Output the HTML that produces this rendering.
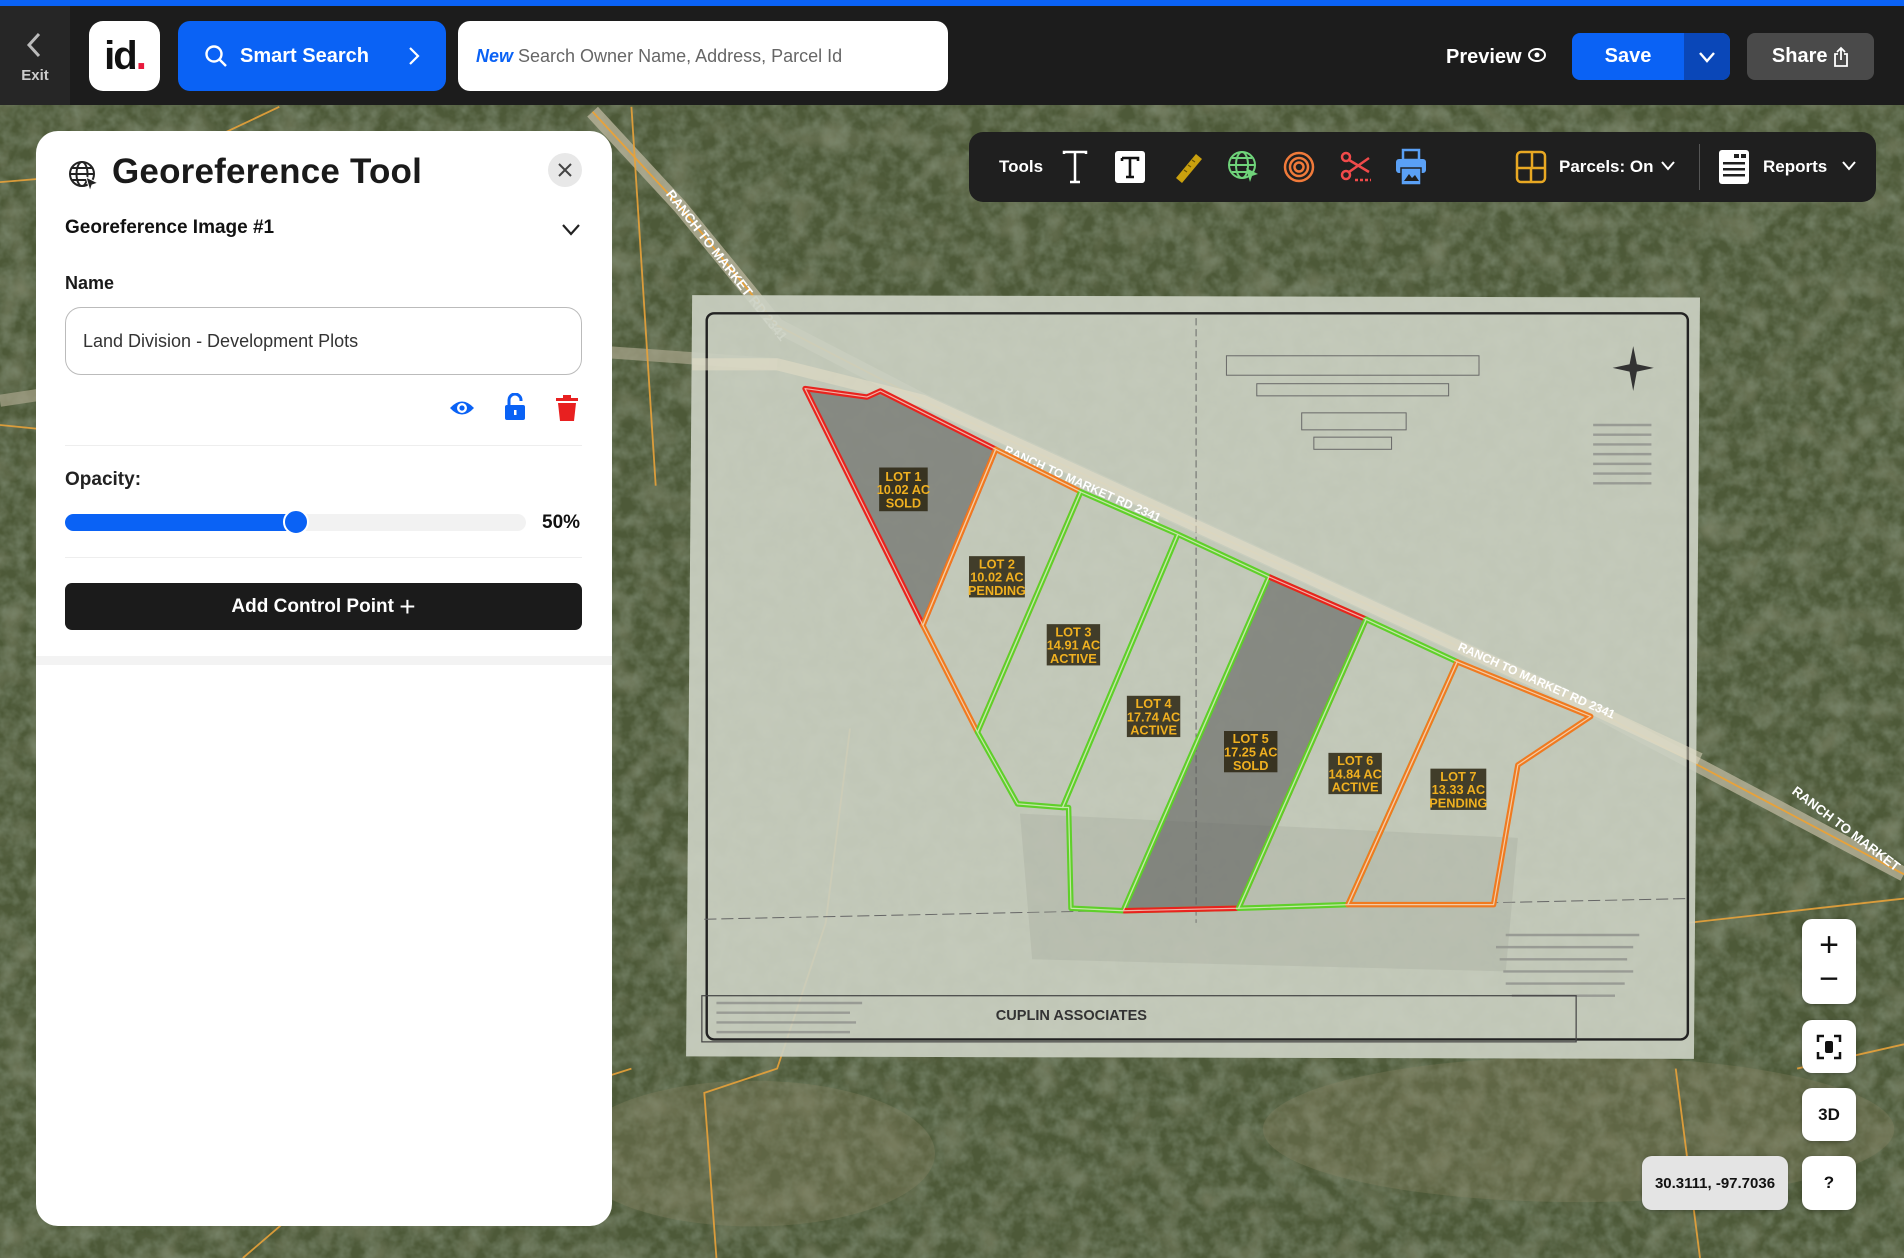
<!DOCTYPE html>
<html><head><meta charset="utf-8">
<style>
*{box-sizing:border-box;margin:0;padding:0}
body{width:1904px;height:1258px;overflow:hidden;font-family:"Liberation Sans",sans-serif;background:#4f5a3d;position:relative}
.abs{position:absolute}
#map{position:absolute;left:0;top:0;width:1904px;height:1258px}
.hdr{left:0;top:0;width:1904px;height:105px;background:#1c1c1c;border-top:6px solid #0a62f5}
.btn{display:flex;align-items:center;justify-content:center;border-radius:12px}
.ctrl{background:#fff;border-radius:10px;display:flex;align-items:center;justify-content:center;font-weight:bold;color:#111;box-shadow:0 1px 4px rgba(0,0,0,.3)}
</style></head><body>
<svg id="map" viewBox="0 0 1568 1036" preserveAspectRatio="none">
<defs>
<filter id="n"><feTurbulence type="fractalNoise" baseFrequency="0.09" numOctaves="3" seed="3"/><feColorMatrix values="0 0 0 0 0.2 0 0 0 0 0.25 0 0 0 0 0.16 0 0 0 1.6 -0.5"/></filter>
<filter id="n2"><feTurbulence type="fractalNoise" baseFrequency="0.04" numOctaves="2" seed="8"/><feColorMatrix values="0 0 0 0 0.5 0 0 0 0 0.5 0 0 0 0 0.38 0 0 0 1.4 -0.65"/></filter>
</defs>
<rect width="1568" height="1036" fill="#4d5938"/>
<rect width="1568" height="1036" filter="url(#n2)" opacity="0.6"/>
<rect width="1568" height="1036" filter="url(#n)" opacity="0.8"/>
<g fill="#8a8664" opacity="0.3">
<ellipse cx="300" cy="620" rx="160" ry="260"/><ellipse cx="1300" cy="930" rx="260" ry="60"/><ellipse cx="620" cy="950" rx="150" ry="60"/>
</g>
<polyline points="488,92 560,170 640,268 760,330 1000,440 1300,578 1568,720" fill="none" stroke="#b8b39a" stroke-width="12" opacity="0.8"/>
<polyline points="488,92 560,170 640,268 760,330 1000,440 1300,578 1568,720" fill="none" stroke="#e8a23a" stroke-width="1.5"/>
<polyline points="0,330 200,300 500,290 640,300" fill="none" stroke="#a9a58c" stroke-width="10" opacity="0.7"/>
<g fill="none" stroke="#e8a23a" stroke-width="1.5" opacity="0.9">
<polyline points="0,150 120,140 230,88"/><polyline points="520,88 540,400"/><polyline points="0,350 100,360 300,290"/>
<polyline points="700,600 680,760 640,880 580,900 590,1036"/><polyline points="200,1036 300,950 520,880"/>
<polyline points="1390,760 1568,740"/><polyline points="1480,880 1568,860"/><polyline points="1380,880 1400,1036"/>
</g>
<text x="548" y="160" fill="#fff" font-size="11" font-weight="bold" transform="rotate(52 548 160)">RANCH TO MARKET RD 2341</text>
<text x="1475" y="653" fill="#fff" font-size="11" font-weight="bold" transform="rotate(37 1475 653)">RANCH TO MARKET</text>
<polygon points="570,243 1400,245 1395,872 565,870" fill="#cbd0c2" opacity="0.92"/>
<rect x="582" y="258" width="808" height="598" rx="6" fill="none" stroke="#222" stroke-width="2"/>
<g fill="none" stroke="#666" stroke-width="0.8">
<rect x="1010" y="293" width="208" height="16"/><rect x="1035" y="316" width="158" height="10"/><rect x="1072" y="340" width="86" height="14"/><rect x="1082" y="360" width="64" height="10"/>
<line x1="985" y1="262" x2="985" y2="760" stroke-dasharray="6 3"/>
<line x1="580" y1="757" x2="1390" y2="740" stroke-dasharray="10 4"/>
</g>
<g stroke="#777" stroke-width="2" opacity="0.55">
<path d="M1240 770 H1350 M1232 780 H1345 M1235 790 H1340 M1238 800 H1345 M1240 810 H1338 M1245 820 H1330"/>
<path d="M1312 350 H1360 M1312 358 H1360 M1312 366 H1360 M1312 374 H1360 M1312 382 H1360 M1312 390 H1360 M1312 398 H1360"/>
<path d="M590 826 H710 M590 834 H700 M590 842 H705 M590 850 H700"/>
</g>
<path d="M1345 285 L1348 300 L1362 303 L1348 306 L1345 322 L1342 306 L1328 303 L1342 300 Z" fill="#333"/>
<polyline points="570,300 640,300 760,330 1000,440 1300,578 1400,625" fill="none" stroke="#e8e0c8" stroke-width="10" opacity="0.5"/>
<g font-size="10" fill="#fff" font-weight="bold"><text x="826" y="373" transform="rotate(24 826 373)">RANCH TO MARKET RD 2341</text>
<text x="1200" y="535" transform="rotate(24 1200 535)">RANCH TO MARKET RD 2341</text></g>
<rect x="578" y="820" width="720" height="38" fill="none" stroke="#444" stroke-width="1"/>
<text x="820" y="840" font-size="12" font-weight="bold" fill="#333">CUPLIN ASSOCIATES</text>
<g fill="#9a9e94" opacity="0.25"><polygon points="840,670 1250,690 1240,800 850,790"/></g>
<g stroke-width="4.5" stroke-linejoin="round">
<polygon points="663,320 714,327 725,322 820,370 760,515" fill="#555" fill-opacity="0.55" stroke="#e8231e"/>
<polygon points="820,370 890,405 805,603 760,515" fill="none" stroke="#f07a20"/>
<polygon points="890,405 970,440 875,665 838,662 805,603" fill="none" stroke="#5fd02a"/>
<polygon points="970,440 1045,475 925,750 882,748 880,665 875,665" fill="none" stroke="#5fd02a"/>
<polygon points="1045,475 1125,510 1020,748 925,750" fill="#555" fill-opacity="0.55" stroke="#5fd02a"/>
<polyline points="1045,475 1125,510 1020,748 925,750" fill="none" stroke="#e8231e"/>
<polygon points="1125,510 1200,545 1110,745 1020,748" fill="none" stroke="#5fd02a"/>
<polygon points="1200,545 1310,590 1250,630 1230,745 1110,745" fill="none" stroke="#f07a20"/>
</g>
<g stroke-width="1" stroke="#f4f0e0" fill="none" opacity="0.7" stroke-linejoin="round">
<polygon points="663,320 714,327 725,322 820,370 760,515"/><polygon points="820,370 890,405 805,603 760,515"/>
<polygon points="890,405 970,440 875,665 838,662 805,603"/><polygon points="970,440 1045,475 925,750 882,748 880,665 875,665"/>
<polygon points="1045,475 1125,510 1020,748 925,750"/><polygon points="1125,510 1200,545 1110,745 1020,748"/>
<polygon points="1200,545 1310,590 1250,630 1230,745 1110,745"/>
</g>
<g font-size="10.5" font-weight="bold" fill="#f0b020" text-anchor="middle">
<rect x="724" y="385" width="40" height="36" fill="#2a2410" opacity="0.85"/><text x="744" y="396">LOT 1</text><text x="744" y="407">10.02 AC</text><text x="744" y="418">SOLD</text>
<rect x="798" y="458" width="46" height="34" fill="#2a2410" opacity="0.85"/><text x="821" y="468">LOT 2</text><text x="821" y="479">10.02 AC</text><text x="821" y="490">PENDING</text>
<rect x="862" y="514" width="44" height="34" fill="#2a2410" opacity="0.85"/><text x="884" y="524">LOT 3</text><text x="884" y="535">14.91 AC</text><text x="884" y="546">ACTIVE</text>
<rect x="928" y="573" width="44" height="34" fill="#2a2410" opacity="0.85"/><text x="950" y="583">LOT 4</text><text x="950" y="594">17.74 AC</text><text x="950" y="605">ACTIVE</text>
<rect x="1008" y="602" width="44" height="34" fill="#2a2410" opacity="0.85"/><text x="1030" y="612">LOT 5</text><text x="1030" y="623">17.25 AC</text><text x="1030" y="634">SOLD</text>
<rect x="1094" y="620" width="44" height="34" fill="#2a2410" opacity="0.85"/><text x="1116" y="630">LOT 6</text><text x="1116" y="641">14.84 AC</text><text x="1116" y="652">ACTIVE</text>
<rect x="1178" y="633" width="46" height="34" fill="#2a2410" opacity="0.85"/><text x="1201" y="643">LOT 7</text><text x="1201" y="654">13.33 AC</text><text x="1201" y="665">PENDING</text>
</g>
</svg>

<div class="abs hdr"></div>
<div class="abs" style="left:0;top:6px;width:70px;height:99px;background:#262626;color:#ccc;text-align:center">
<svg width="30" height="30" viewBox="0 0 30 30" style="margin-top:24px"><path d="M19 4 L9 15 L19 26" fill="none" stroke="#bbb" stroke-width="3"/></svg>
<div style="font-size:15px;font-weight:bold;margin-top:2px">Exit</div></div>
<div class="abs btn" style="left:89px;top:21px;width:71px;height:70px;background:#fff;border-radius:14px;font-size:40px;font-weight:bold;color:#111;letter-spacing:-2px">id<span style="color:#e8193c">.</span></div>
<div class="abs btn" style="left:178px;top:21px;width:268px;height:70px;background:#0a62f5;color:#fff;font-size:20px;font-weight:bold;justify-content:flex-start;padding-left:26px">
<svg width="24" height="24" viewBox="0 0 24 24"><circle cx="10" cy="10" r="7.5" fill="none" stroke="#fff" stroke-width="2.4"/><path d="M15.5 15.5 L22 22" stroke="#fff" stroke-width="2.4"/></svg>
<span style="margin-left:12px">Smart Search</span>
<svg width="14" height="22" viewBox="0 0 14 22" style="margin-left:38px"><path d="M3 3 L11 11 L3 19" fill="none" stroke="#fff" stroke-width="2.2"/></svg></div>
<div class="abs btn" style="left:458px;top:21px;width:490px;height:70px;background:#fff;justify-content:flex-start;padding-left:18px;font-size:18px;color:#666"><b style="color:#0a62f5;font-style:italic">New</b>&nbsp;Search Owner Name, Address, Parcel Id</div>
<div class="abs" style="left:1446px;top:46px;color:#fff;font-size:20px;font-weight:bold">Preview <svg width="20" height="16" viewBox="0 0 20 16" style="vertical-align:0"><ellipse cx="10" cy="8" rx="8" ry="6" fill="none" stroke="#fff" stroke-width="2"/><circle cx="10" cy="8" r="2.5" fill="#fff"/></svg></div>
<div class="abs btn" style="left:1572px;top:33px;width:158px;height:47px;background:#0a62f5;border-radius:8px;overflow:hidden;justify-content:flex-start">
<div style="width:112px;text-align:center;color:#fff;font-size:20px;font-weight:bold">Save</div>
<div style="width:46px;height:47px;background:#0a47b8;display:flex;align-items:center;justify-content:center"><svg width="18" height="12" viewBox="0 0 18 12"><path d="M2 2 L9 10 L16 2" fill="none" stroke="#fff" stroke-width="2.4"/></svg></div></div>
<div class="abs btn" style="left:1747px;top:33px;width:127px;height:47px;background:#4a4a4a;border-radius:8px;color:#fff;font-size:20px;font-weight:bold">Share&nbsp;<svg width="16" height="22" viewBox="0 0 16 22"><path d="M5 8 H2 V20 H14 V8 H11 M8 14 V2 M4 6 L8 2 L12 6" fill="none" stroke="#fff" stroke-width="1.8"/></svg></div>

<div class="abs" style="left:969px;top:132px;width:907px;height:70px;background:#1f1f1f;border-radius:14px;color:#fff;font-weight:bold;font-size:17px">
<span class="abs" style="left:30px;top:25px">Tools</span>
<svg class="abs" style="left:92px;top:18px" width="28" height="34" viewBox="0 0 28 34"><path d="M3 4 V2 H25 V4 M14 2 V32 M9 32 H19" fill="none" stroke="#fff" stroke-width="2.5"/></svg>
<svg class="abs" style="left:145px;top:18px" width="32" height="34" viewBox="0 0 32 34"><rect x="1" y="1" width="30" height="32" rx="3" fill="#fff"/><path d="M8 8 H24 V11 M8 11 V8 M16 8 V27 M12 27 H20" fill="none" stroke="#111" stroke-width="2.6"/></svg>
<svg class="abs" style="left:203px;top:18px" width="32" height="34" viewBox="0 0 32 34"><path d="M4 28 L24 4 L30 9 L10 33 Z" fill="#c9a00e"/><path d="M12 20 L15 22 M16 15 L19 17 M20 10 L23 12" stroke="#6a5505" stroke-width="1.2"/></svg>
<svg class="abs" style="left:258px;top:18px" width="34" height="34" viewBox="0 0 34 34"><g fill="none" stroke="#6fd37a" stroke-width="2"><circle cx="15" cy="15" r="13"/><ellipse cx="15" cy="15" rx="6" ry="13"/><path d="M2 15 H28 M5 8 H25 M5 22 H20"/></g><path d="M19 18 L31 24 L25 26 L23 32 Z" fill="#6fd37a"/></svg>
<svg class="abs" style="left:314px;top:18px" width="32" height="34" viewBox="0 0 32 34"><g fill="none" stroke="#f07a3a" stroke-width="2.5"><circle cx="16" cy="17" r="14"/><circle cx="16" cy="17" r="9"/><circle cx="16" cy="17" r="4.5"/></g></svg>
<svg class="abs" style="left:370px;top:18px" width="34" height="34" viewBox="0 0 34 34"><g fill="none" stroke="#f04a4a" stroke-width="2.5"><circle cx="7" cy="7" r="4"/><circle cx="7" cy="25" r="4"/><path d="M10 10 L30 22 M10 22 L30 8"/></g><path d="M16 30 H32" stroke="#f04a4a" stroke-width="2.5" stroke-dasharray="3 2"/></svg>
<svg class="abs" style="left:426px;top:16px" width="32" height="38" viewBox="0 0 32 38"><rect x="8" y="2" width="16" height="10" fill="none" stroke="#5aa0f5" stroke-width="2.5"/><rect x="1" y="11" width="30" height="14" rx="3" fill="#5aa0f5"/><rect x="6" y="20" width="20" height="17" fill="#5aa0f5" stroke="#1f1f1f" stroke-width="1.5"/><path d="M9 33 L14 26 L17 30 L20 27 L24 33 Z" fill="#1f1f1f"/></svg>
<svg class="abs" style="left:546px;top:18px" width="32" height="34" viewBox="0 0 32 34"><g fill="none" stroke="#e8a823" stroke-width="2.5"><rect x="2" y="2" width="28" height="30" rx="4"/><path d="M2 18 H30 M16 18 V32 M17 2 V18"/></g></svg>
<span class="abs" style="left:590px;top:25px">Parcels: On</span>
<svg class="abs" style="left:692px;top:29px" width="14" height="10" viewBox="0 0 14 10"><path d="M1 1 L7 8 L13 1" fill="none" stroke="#fff" stroke-width="2"/></svg>
<div class="abs" style="left:730px;top:12px;width:1px;height:46px;background:#555"></div>
<svg class="abs" style="left:750px;top:18px" width="30" height="34" viewBox="0 0 30 34"><rect x="0" y="0" width="30" height="34" rx="3" fill="#fff"/><g fill="#1f1f1f"><rect x="15" y="4" width="5" height="4"/><rect x="22" y="4" width="5" height="4"/><rect x="4" y="12" width="22" height="2.5"/><rect x="4" y="18" width="22" height="2.5"/><rect x="4" y="24" width="22" height="2.5"/></g></svg>
<span class="abs" style="left:794px;top:25px">Reports</span>
<svg class="abs" style="left:873px;top:29px" width="14" height="10" viewBox="0 0 14 10"><path d="M1 1 L7 8 L13 1" fill="none" stroke="#fff" stroke-width="2"/></svg>
</div>

<div class="abs" style="left:36px;top:131px;width:576px;height:1095px;background:#fff;border-radius:22px;overflow:hidden">
<svg class="abs" style="left:32px;top:29px" width="32" height="32" viewBox="0 0 32 32"><g fill="none" stroke="#222" stroke-width="2"><circle cx="14" cy="14" r="12"/><ellipse cx="14" cy="14" rx="5.5" ry="12"/><path d="M2 14 H26 M4 8 H24 M4 20 H18"/></g><path d="M18 17 L30 23 L24 25 L22 31 Z" fill="#222" stroke="#fff" stroke-width="1"/></svg>
<div class="abs" style="left:76px;top:21px;font-size:35px;font-weight:bold;color:#1a1a1a;letter-spacing:0.2px">Georeference Tool</div>
<div class="abs" style="left:512px;top:22px;width:34px;height:34px;border-radius:50%;background:#e8e8e8"><svg width="34" height="34" viewBox="0 0 34 34"><path d="M11 11 L23 23 M23 11 L11 23" stroke="#444" stroke-width="2"/></svg></div>
<div class="abs" style="left:29px;top:86px;font-size:19px;font-weight:bold;color:#111">Georeference Image #1</div>
<svg class="abs" style="left:525px;top:92px" width="20" height="14" viewBox="0 0 20 14"><path d="M2 2 L10 11 L18 2" fill="none" stroke="#222" stroke-width="2.2"/></svg>
<div class="abs" style="left:29px;top:142px;font-size:18px;font-weight:bold;color:#1a1a1a">Name</div>
<div class="abs" style="left:29px;top:176px;width:517px;height:68px;border:1.5px solid #bbb;border-radius:16px;padding:23px 0 0 17px;font-size:18px;color:#333">Land Division - Development Plots</div>
<svg class="abs" style="left:413px;top:268px" width="26" height="18" viewBox="0 0 26 18"><path d="M1 9 Q13 -4 25 9 Q13 22 1 9 Z" fill="#0a62f5"/><circle cx="13" cy="9" r="5" fill="#fff"/><circle cx="13" cy="9" r="2.6" fill="#0a62f5"/></svg>
<svg class="abs" style="left:468px;top:262px" width="22" height="28" viewBox="0 0 22 28"><path d="M5 12 V7 A6 6 0 0 1 17 7 V8" fill="none" stroke="#0a62f5" stroke-width="3"/><rect x="1" y="12" width="20" height="15" rx="2" fill="#0a62f5"/><rect x="10" y="17" width="2.5" height="5" fill="#fff"/></svg>
<svg class="abs" style="left:520px;top:264px" width="22" height="26" viewBox="0 0 22 26"><rect x="0" y="3" width="22" height="3" fill="#e82020"/><rect x="7" y="0" width="8" height="4" fill="#e82020"/><path d="M2 8 H20 L18 26 H4 Z" fill="#e82020"/></svg>
<div class="abs" style="left:29px;top:314px;width:517px;height:1px;background:#eee"></div>
<div class="abs" style="left:29px;top:338px;font-size:19px;font-weight:bold;color:#222">Opacity:</div>
<div class="abs" style="left:29px;top:383px;width:461px;height:17px;border-radius:9px;background:#f2f2f2"></div>
<div class="abs" style="left:29px;top:383px;width:232px;height:17px;border-radius:9px;background:#0a62f5"></div>
<div class="abs" style="left:247px;top:378px;width:26px;height:26px;border-radius:50%;background:#0a62f5;border:2px solid #fff"></div>
<div class="abs" style="left:506px;top:381px;font-size:19px;font-weight:bold;color:#111">50%</div>
<div class="abs" style="left:29px;top:426px;width:517px;height:1px;background:#eee"></div>
<div class="abs btn" style="left:29px;top:452px;width:517px;height:47px;background:#1b1b1b;border-radius:7px;color:#fff;font-size:19px;font-weight:bold">Add Control Point&nbsp;<span style="font-size:28px;font-weight:normal;line-height:1">+</span></div>
<div class="abs" style="left:0;top:525px;width:576px;height:9px;background:#f3f3f3"></div>
</div>

<div class="abs ctrl" style="left:1802px;top:919px;width:54px;height:85px;flex-direction:column;font-size:34px;font-weight:normal;line-height:1"><span>+</span><span>−</span></div>
<div class="abs ctrl" style="left:1802px;top:1020px;width:54px;height:53px"><svg width="26" height="26" viewBox="0 0 26 26"><path d="M2 8 V2 H8 M18 2 H24 V8 M24 18 V24 H18 M8 24 H2 V18" fill="none" stroke="#111" stroke-width="2.5"/><rect x="9" y="7" width="8" height="12" rx="2" fill="#111"/></svg></div>
<div class="abs ctrl" style="left:1802px;top:1088px;width:54px;height:53px;font-size:17px">3D</div>
<div class="abs ctrl" style="left:1802px;top:1156px;width:54px;height:54px;font-size:17px">?</div>
<div class="abs ctrl" style="left:1642px;top:1156px;width:146px;height:54px;background:#e4e4e4;font-size:15px">30.3111, -97.7036</div>
</body></html>
